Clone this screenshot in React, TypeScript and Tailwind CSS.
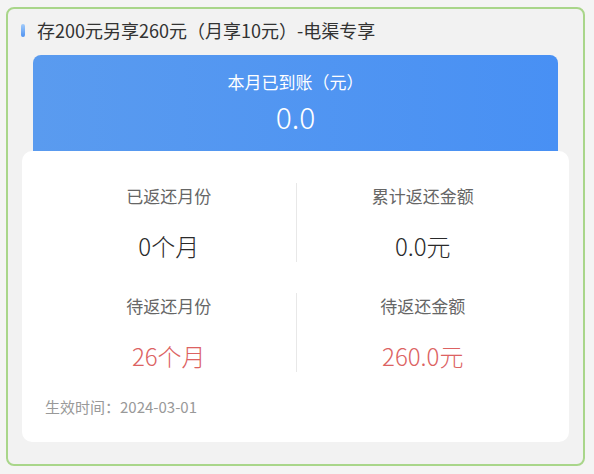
import React from 'react';

const stats = [
  { label: '已返还月份', value: '0个月', red: false },
  { label: '累计返还金额', value: '0.0元', red: false },
  { label: '待返还月份', value: '26个月', red: true },
  { label: '待返还金额', value: '260.0元', red: true },
];

export default function App() {
  return (
    <div
      className="w-[594px] h-[474px] bg-[#f4f4f4] pt-[7px] pl-[6px]"
      style={{ fontFamily: '"Noto Sans CJK SC", "Noto Sans", sans-serif' }}
    >
      <div className="w-[579px] h-[459px] rounded-[8px] border-2 border-[#a9d68a] bg-[#f2f2f2] flex flex-col">
        {/* Title */}
        <div className="flex items-center pl-[13px] pt-[9px] h-[33px]">
          <span className="w-[4px] h-[13px] rounded-full bg-gradient-to-b from-[#a3ccfa] to-[#4f92f0]" />
          <span className="ml-[12px] text-[18px] leading-[24px] text-[#333]">
            存200元另享260元（月享10元）-电渠专享
          </span>
        </div>

        {/* Blue summary */}
        <div className="mt-[13px] mx-[25px] h-[96px] rounded-t-[8px] bg-gradient-to-r from-[#5a9bef] to-[#4890f4] flex flex-col items-center pt-[16px] text-white">
          <div className="text-[17px] leading-[22px]">本月已到账（元）</div>
          <div className="mt-[5px] text-[30px] leading-[36px] font-light">0.0</div>
        </div>

        {/* White details */}
        <div className="mx-[14px] h-[291px] rounded-[10px] bg-white px-[20px] pt-[32px]">
          <div className="grid grid-cols-2 gap-y-[31px]">
            {stats.map((s, i) => (
              <div
                key={s.label}
                className={`h-[79px] flex flex-col items-center justify-between ${i % 2 === 1 ? 'border-l border-[#e8e8e8]' : ''}`}
              >
                <div className="text-[17px] leading-[24px] text-[#666] pt-[1px]">{s.label}</div>
                <div className={`text-[24px] leading-[32px] font-light ${s.red ? 'text-[#dc6262]' : 'text-[#2a2a2a]'}`}>
                  {s.value}
                </div>
              </div>
            ))}
          </div>
          <div className="mt-[25px] pl-[3px] text-[15px] leading-[20px] text-[#999]">生效时间：2024-03-01</div>
        </div>
      </div>
    </div>
  );
}
